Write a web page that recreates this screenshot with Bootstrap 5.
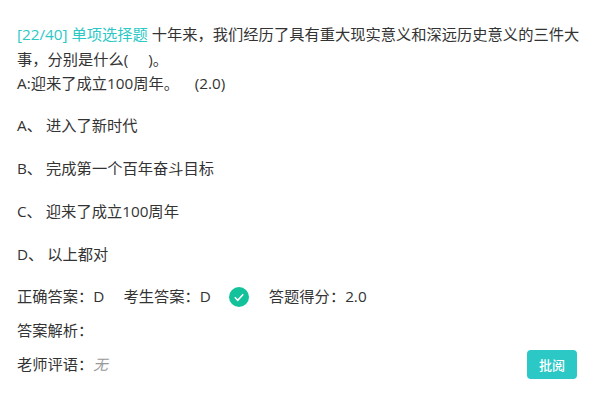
<!DOCTYPE html>
<html lang="zh">
<head>
<meta charset="utf-8">
<link href="https://cdn.jsdelivr.net/npm/bootstrap@5.3.0/dist/css/bootstrap.min.css" rel="stylesheet">
<style>
body{font-family:"Open Sans","Noto Sans CJK SC",sans-serif;font-size:15.27px;color:#333;background:#fff;line-height:24.5px}
.paper{padding:22px 17px 0 17px}
.qtag{color:#2bc8c6}
.optitem{height:43px;display:flex;align-items:center}
.opts{margin-top:8px}
.answers{height:24px;margin-top:9px}
.gapa{margin-left:19px}
.gapc{margin-left:20px}
.okdot{width:20px;height:20px;background:#13c29a;border-radius:50%;margin-left:18px}
.review{margin-top:9px}
.analysis{margin-top:9px}
.nocomment{color:#999;font-style:italic;font-size:14.5px}
.markbtn{background:#2bc8c6;color:#fff;border:0;border-radius:4px;font-size:13px;font-weight:500;line-height:18px;padding:5px 0;width:50px;height:29px;margin-right:6px;margin-top:-1px}
.markbtn:hover{background:#2bc8c6;color:#fff}
</style>
</head>
<body>
<div class="paper">
  <div><span class="qtag">[22/40] 单项选择题</span> 十年来，我们经历了具有重大现实意义和深远历史意义的三件大事，分别是什么(&nbsp;&nbsp;&nbsp;&nbsp;&nbsp;)。<br>A:迎来了成立100周年。 &nbsp;&nbsp; (2.0)</div>
  <div class="opts">
    <div class="optitem">A、 进入了新时代</div>
    <div class="optitem">B、 完成第一个百年奋斗目标</div>
    <div class="optitem">C、 迎来了成立100周年</div>
    <div class="optitem">D、 以上都对</div>
  </div>
  <div class="answers d-flex align-items-center">
    <span>正确答案：D</span>
    <span class="gapa">考生答案：D</span>
    <svg class="okdot" viewBox="0 0 20 20"><path d="M5.8 10.3l3 3 5.4-6" fill="none" stroke="#fff" stroke-width="1.6"/></svg>
    <span class="gapc">答题得分：2.0</span>
  </div>
  <div class="analysis">答案解析：</div>
  <div class="d-flex justify-content-between align-items-center review">
    <div>老师评语：<span class="nocomment">无</span></div>
    <button class="btn markbtn" type="button">批阅</button>
  </div>
</div>
</body>
</html>
